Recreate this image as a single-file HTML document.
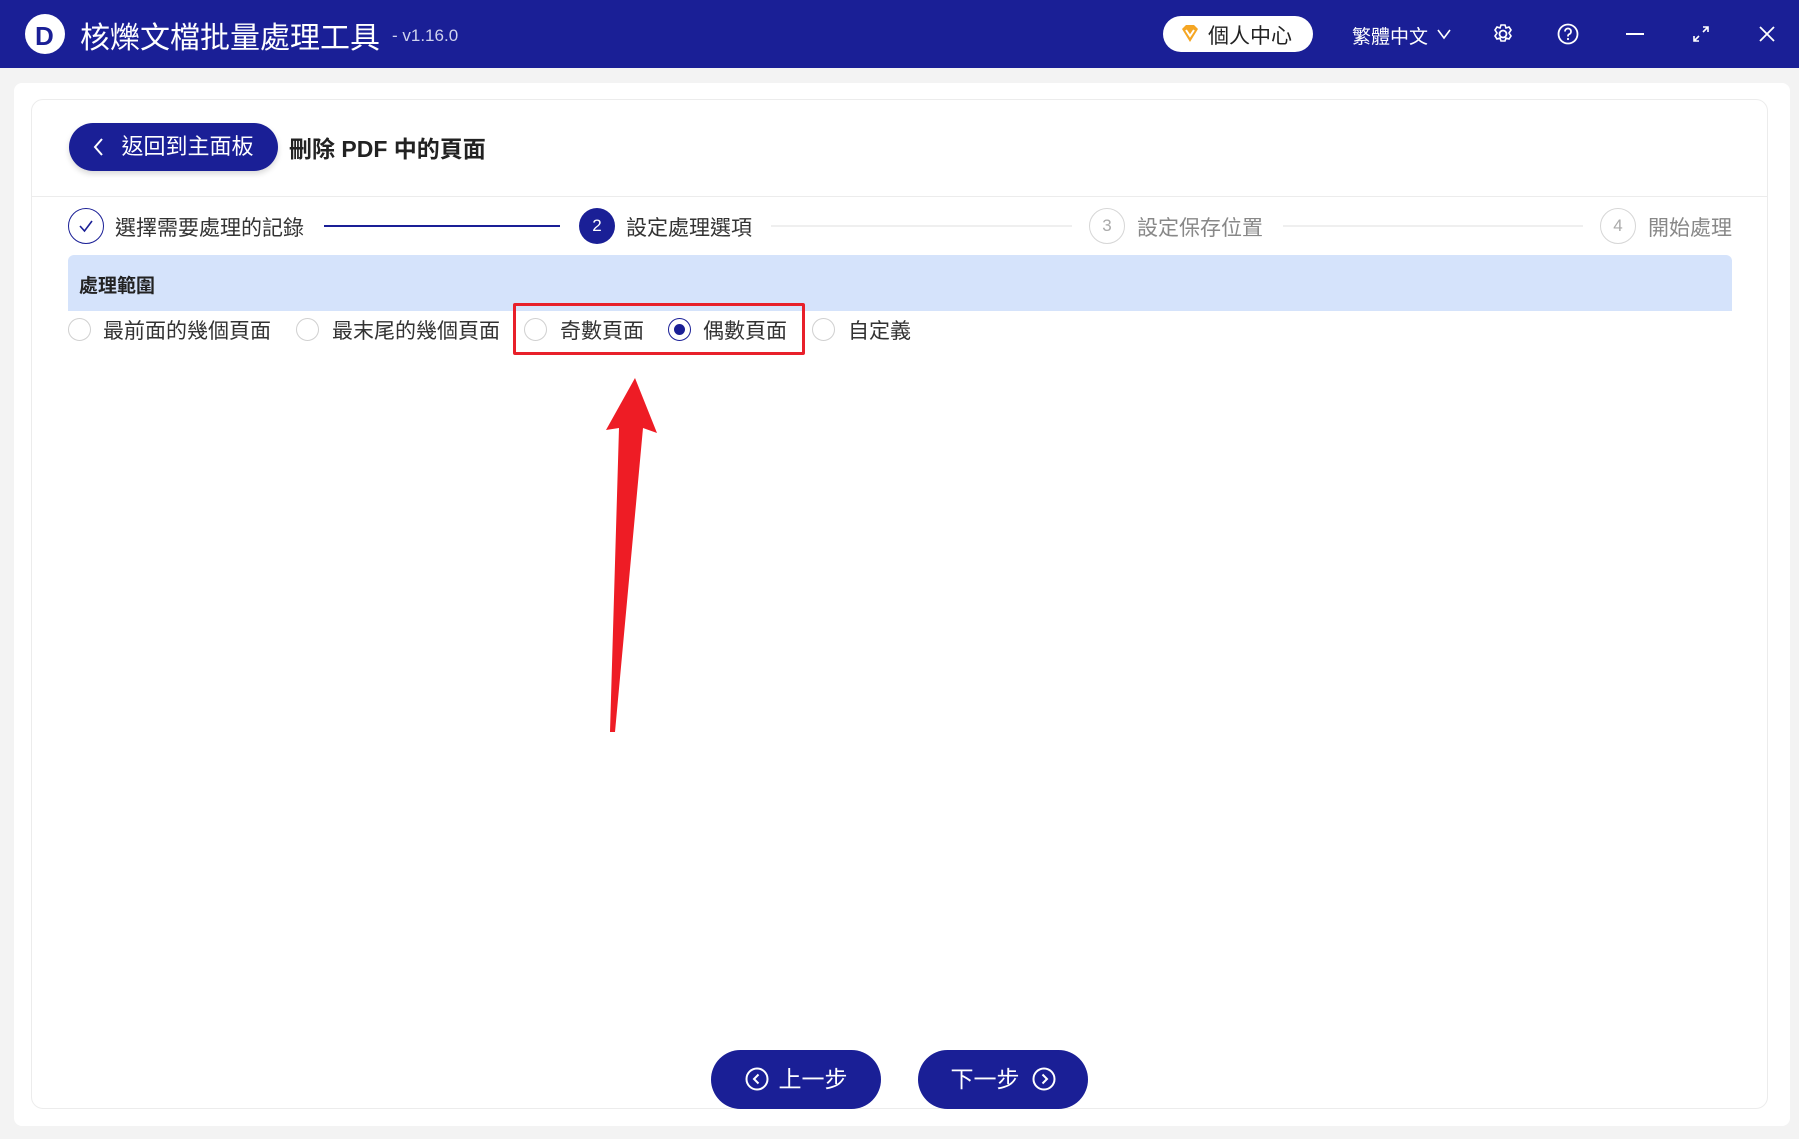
<!DOCTYPE html>
<html><head><meta charset="utf-8"><style>
*{margin:0;padding:0;box-sizing:border-box}
body{width:1799px;height:1139px;background:#f3f3f3;font-family:"Liberation Sans","Noto Sans CJK TC",sans-serif;position:relative;overflow:hidden;color:#222}
.a{position:absolute;white-space:nowrap}
.hdr{left:0;top:0;width:1799px;height:68px;background:#1a1f96}
.card{left:14px;top:83px;width:1776px;height:1043px;background:#fff;border-radius:8px}
.panel{left:31px;top:99px;width:1737px;height:1010px;border:1px solid #ececec;border-radius:12px;background:#fff}
.circ{border-radius:50%;text-align:center}
.radio{width:23px;height:23px;border:1px solid #d0d0d0;border-radius:50%;background:#fff}
.rt{font-size:21px;color:#333}
.btn{background:#1a1f96;color:#fff;border-radius:30px;font-size:23px;text-align:center}
</style></head><body>
<div class="a hdr"></div>
<div class="a circ" style="left:25px;top:14px;width:40px;height:40px;background:#fff"></div>
<div class="a" style="left:35px;top:21px;font:bold 26px 'Liberation Sans',sans-serif;color:#1a1f96">D</div>
<div class="a" style="left:80px;top:13px;font-size:30px;color:#fff">核爍文檔批量處理工具</div>
<div class="a" style="left:392px;top:26px;font-size:17px;color:#d0d3ee">- v1.16.0</div>
<div class="a" style="left:1163px;top:16px;width:150px;height:36px;background:#fff;border-radius:18px"></div>
<svg class="a" style="left:1180px;top:25px" width="20" height="18" viewBox="0 0 20 18"><path d="M2 4 L6 0 H14 L18 4 L10 17 Z" fill="#f5a623"/><path d="M6 5 L10 11 L14 5" stroke="#fff" stroke-width="2" fill="none"/></svg>
<div class="a" style="left:1208px;top:20px;font-size:21px;color:#222">個人中心</div>
<div class="a" style="left:1352px;top:22px;font-size:19px;color:#fff">繁體中文</div>
<svg class="a" style="left:1436px;top:28px" width="16" height="12"><path d="M2 2 L8 10 L14 2" stroke="#fff" stroke-width="1.6" fill="none"/></svg>
<svg class="a" style="left:1492px;top:23px" width="22" height="22" viewBox="0 0 22 22"><circle cx="11" cy="11" r="3.5" stroke="#fff" stroke-width="1.8" fill="none"/><path d="M9 2h4l1 3 3-1 2 3-2 3 2 3-2 3-3-1-1 3H9l-1-3-3 1-2-3 2-3-2-3 2-3 3 1z" stroke="#fff" stroke-width="1.6" fill="none"/></svg>
<svg class="a" style="left:1557px;top:23px" width="22" height="22"><circle cx="11" cy="11" r="9.5" stroke="#fff" stroke-width="1.8" fill="none"/><path d="M8 8.5a3 3 0 1 1 4 2.8c-1 .4-1 1-1 2.2" stroke="#fff" stroke-width="1.8" fill="none"/><circle cx="11" cy="16" r="1.1" fill="#fff"/></svg>
<div class="a" style="left:1626px;top:33px;width:18px;height:2px;background:#fff"></div>
<svg class="a" style="left:1692px;top:25px" width="18" height="18"><path d="M11 2h5v5M16 2l-5 5M7 16H2v-5M2 16l5-5" stroke="#fff" stroke-width="1.6" fill="none"/></svg>
<svg class="a" style="left:1758px;top:25px" width="18" height="18"><path d="M2 2L16 16M16 2L2 16" stroke="#fff" stroke-width="1.8"/></svg>

<div class="a card"></div>
<div class="a panel"></div>
<div class="a btn" style="left:69px;top:123px;width:209px;height:48px;line-height:48px;font-size:22px;box-shadow:0 3px 6px rgba(0,0,0,.15)"><svg width="12" height="20" style="vertical-align:-3px;margin-right:16px"><path d="M9 2L2 10l7 8" stroke="#fff" stroke-width="2" fill="none"/></svg>返回到主面板</div>
<div class="a" style="left:289px;top:130px;font-size:23px;font-weight:bold;color:#222">刪除 PDF 中的頁面</div>
<div class="a" style="left:32px;top:196px;width:1735px;height:1px;background:#ececec"></div>

<div class="a circ" style="left:68px;top:208px;width:36px;height:36px;border:1.5px solid #1a1f96"></div>
<svg class="a" style="left:77px;top:217px" width="18" height="18"><path d="M3 9 L7.5 14 L15 4" stroke="#1a1f96" stroke-width="1.6" fill="none"/></svg>
<div class="a" style="left:115px;top:212px;font-size:21px;color:#333">選擇需要處理的記錄</div>
<div class="a" style="left:324px;top:225px;width:236px;height:2px;background:#1a1f96"></div>
<div class="a circ" style="left:579px;top:208px;width:36px;height:36px;background:#1a1f96;color:#fff;font-size:17px;line-height:36px">2</div>
<div class="a" style="left:626px;top:212px;font-size:21px;color:#333">設定處理選項</div>
<div class="a" style="left:771px;top:225px;width:301px;height:2px;background:#efefef"></div>
<div class="a circ" style="left:1089px;top:208px;width:36px;height:36px;border:1.5px solid #d6d6d6;color:#aaa;font-size:17px;line-height:33px">3</div>
<div class="a" style="left:1137px;top:212px;font-size:21px;color:#888">設定保存位置</div>
<div class="a" style="left:1283px;top:225px;width:300px;height:2px;background:#efefef"></div>
<div class="a circ" style="left:1600px;top:208px;width:36px;height:36px;border:1.5px solid #d6d6d6;color:#aaa;font-size:17px;line-height:33px">4</div>
<div class="a" style="left:1648px;top:212px;font-size:21px;color:#888">開始處理</div>

<div class="a" style="left:68px;top:255px;width:1664px;height:56px;background:#d5e3fb;border-radius:6px 6px 0 0"></div>
<div class="a" style="left:79px;top:271px;font-size:19px;font-weight:bold;color:#222">處理範圍</div>

<div class="a radio" style="left:68px;top:318px"></div><div class="a rt" style="left:103px;top:315px">最前面的幾個頁面</div>
<div class="a radio" style="left:296px;top:318px"></div><div class="a rt" style="left:332px;top:315px">最末尾的幾個頁面</div>
<div class="a radio" style="left:524px;top:318px"></div><div class="a rt" style="left:560px;top:315px">奇數頁面</div>
<div class="a radio" style="left:668px;top:318px;border:1.5px solid #1a1f96"></div><div class="a circ" style="left:674px;top:324px;width:11px;height:11px;background:#1a1f96"></div><div class="a rt" style="left:703px;top:315px">偶數頁面</div>
<div class="a radio" style="left:812px;top:318px"></div><div class="a rt" style="left:848px;top:315px">自定義</div>
<div class="a" style="left:513px;top:303px;width:292px;height:52px;border:3px solid #e8202a;border-radius:2px"></div>
<svg class="a" style="left:0;top:0" width="1799" height="1139"><path d="M635 378 L657 433 L643 428 L615 732 L610 732 L619 428 L606 430 Z" fill="#ee1c25"/></svg>

<div class="a btn" style="left:711px;top:1050px;width:170px;height:59px;line-height:59px"><svg width="24" height="24" style="vertical-align:-4px;margin-right:10px"><circle cx="12" cy="12" r="10.5" stroke="#fff" stroke-width="2" fill="none"/><path d="M13.5 7.5L9 12l4.5 4.5" stroke="#fff" stroke-width="2" fill="none"/></svg>上一步</div>
<div class="a btn" style="left:918px;top:1050px;width:170px;height:59px;line-height:59px">下一步<svg width="24" height="24" style="vertical-align:-4px;margin-left:12px"><circle cx="12" cy="12" r="10.5" stroke="#fff" stroke-width="2" fill="none"/><path d="M10.5 7.5L15 12l-4.5 4.5" stroke="#fff" stroke-width="2" fill="none"/></svg></div>
</body></html>
